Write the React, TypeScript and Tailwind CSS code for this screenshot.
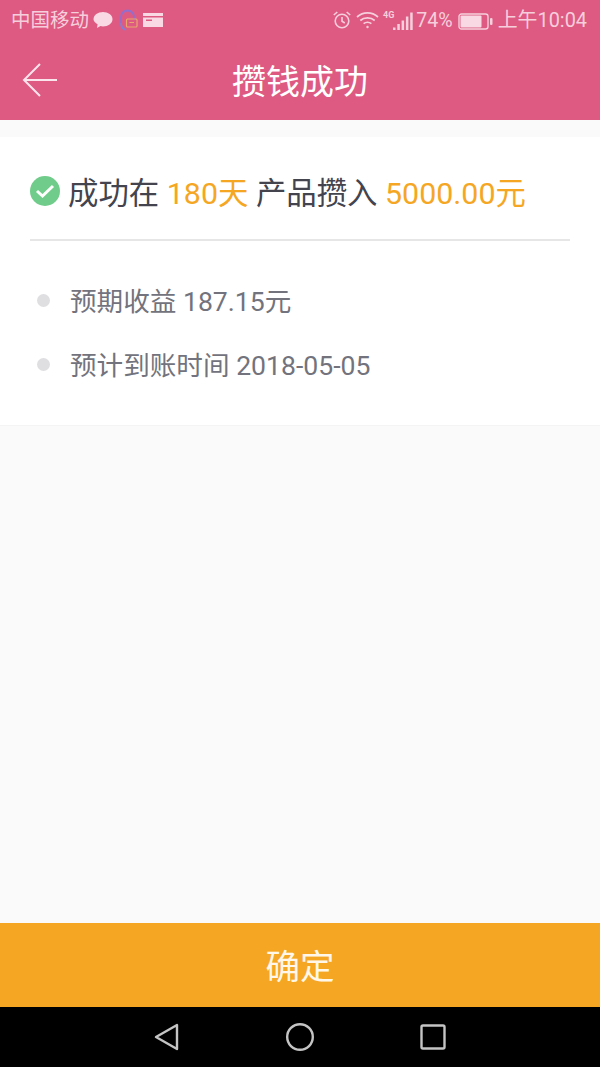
const cjk = "font-['Roboto','Noto_Sans_CJK_SC',sans-serif]";

const StatusLeft = () => (
  <div className="flex items-center pt-[2px]">
    <span className="ml-[11px] text-[19.5px] leading-none text-[#f6cfdc]">中国移动</span>
    <svg className="ml-[4px] -translate-y-[1px]" width="20" height="18" viewBox="0 0 20 18" fill="#f8d9e4">
      <path d="M10 1c5 0 9.500 3 9.500 7.200s-4.500 7.200-9.500 7.200c-.9 0-1.700-.1-2.500-.3L4 17l.6-3.700C2.400 12 .5 10.200.5 8.200.5 4 5 1 10 1z" />
    </svg>
    <svg className="ml-[6px] -translate-y-[1px]" width="19" height="23" viewBox="0 0 19 23" fill="none">
      <path d="M2 14V8a6.500 6.500 0 0 1 13 0v3" stroke="#8f6fd0" strokeWidth="1.800" />
      <path d="M2 14c0 3 1.500 6 5 7" stroke="#7f7fd8" strokeWidth="1.800" />
      <rect x="7.500" y="10" width="10.500" height="8" rx="1" stroke="#e8a86c" strokeWidth="1.200" />
      <path d="M10.500 13.500h4.500" stroke="#e8a86c" strokeWidth="1" />
    </svg>
    <svg className="ml-[5px] -translate-y-[1px]" width="20" height="16" viewBox="0 0 20 16" fill="#f8d9e4">
      <path d="M0 1h20v3H0z" />
      <path d="M0 5.500h20V15H0z" />
      <path d="M3 7.500h6v1.500H3z" fill="#de5a82" />
    </svg>
  </div>
);

const StatusRight = () => (
  <div className="flex items-center pt-[2px]">
    <svg className="-translate-y-[1px]" width="20" height="20" viewBox="0 0 20 20" fill="none" stroke="#f6cfdc" strokeWidth="1.600">
      <circle cx="10" cy="11" r="6.800" />
      <path d="M10 7v4.200l2.800 1.800M1.800 5l3.500-3M18.200 5l-3.500-3" />
    </svg>
    <svg className="ml-[4px] -translate-y-[1px]" width="23" height="18" viewBox="0 0 23 18" fill="none" stroke="#f6cfdc" strokeWidth="1.700">
      <path d="M1 6c6-5.500 15-5.500 21 0M4.300 9.500c4-3.600 10.400-3.600 14.400 0M7.600 12.700c2.200-1.800 5.600-1.800 7.800 0" />
      <circle cx="11.500" cy="16" r="1.200" fill="#f6cfdc" stroke="none" />
    </svg>
    <div className="ml-[4px] flex h-[20px] items-end">
      <span className="mb-[11px] text-[9px] leading-none font-bold text-[#f6cfdc]">4G</span>
      <svg className="ml-[-1px]" width="20" height="20" viewBox="0 0 20 20" fill="#f6cfdc">
        <path d="M0 16.500h2.500V19H0zM4.300 13h2.500v6H4.300zM8.600 9.500h2.500V19H8.600zM12.900 5.500h2.500V19h-2.500zM17.200 1.500h2.500V19h-2.500z" />
      </svg>
    </div>
    <span className="ml-[3px] text-[19.6px] leading-none text-[#f6cfdc]">74%</span>
    <svg className="ml-[5px]" width="35" height="17" viewBox="0 0 35 17" fill="none">
      <rect x="1" y="1" width="29" height="15" rx="2.500" stroke="#f6cfdc" strokeWidth="1.400" />
      <rect x="2.500" y="2.500" width="21" height="12" rx="1" fill="#f8d9e4" />
      <rect x="32" y="5" width="2.500" height="7" rx="1" fill="#f6cfdc" />
    </svg>
    <span className="mr-[13px] ml-[5px] text-[19.9px] leading-none text-[#f6cfdc]">上午10:04</span>
  </div>
);

const Bullet = ({ children }: { children: string }) => (
  <div className="flex h-[64px] items-center">
    <span className="ml-[7px] h-[13px] w-[13px] shrink-0 -translate-y-[1px] rounded-full bg-[#dfdfe1]" />
    <span className="ml-[21px] -translate-x-[1px] translate-y-[1px] text-[26.6px] leading-none text-[#72737c]">{children}</span>
  </div>
);

export default function App() {
  return (
    <div className={`flex h-[1067px] w-[600px] flex-col overflow-hidden bg-[#fafafa] ${cjk}`}>
      <div className="flex h-[120px] shrink-0 flex-col bg-[#de5a82]">
        <div className="flex h-[40px] items-center justify-between">
          <StatusLeft />
          <StatusRight />
        </div>
        <div className="relative flex h-[80px] items-center justify-center pt-[4px]">
          <svg className="absolute top-[22px] left-[22px]" width="36" height="36" viewBox="0 0 36 36" fill="none" stroke="#fbe4ec" strokeWidth="2">
            <path d="M18 2L2 18l16 16M2 18h33" />
          </svg>
          <span className="text-[34px] leading-none text-white">攒钱成功</span>
        </div>
      </div>

      <div className="mt-[17px] h-[289px] shrink-0 border-b border-[#f4f4f4] bg-white px-[30px]">
        <div className="flex h-[104px] items-start border-b-2 border-[#e6e6e6]">
          <svg className="mt-[39px] shrink-0" width="30" height="30" viewBox="0 0 30 30">
            <circle cx="15" cy="15" r="15" fill="#70cc8a" />
            <path d="M7 15l5.500 5L23 10" fill="none" stroke="#fff" strokeWidth="3" />
          </svg>
          <div className="mt-[42px] ml-[8px] text-[30.4px] leading-none whitespace-pre text-[#43444e]">
            成功在 <span className="text-[#f5a623]">180天</span> 产品攒入 <span className="text-[#f5a623]">5000.00元</span>
          </div>
        </div>
        <div className="pt-[28px]">
          <Bullet>预期收益 187.15元</Bullet>
          <Bullet>预计到账时间 2018-05-05</Bullet>
        </div>
      </div>

      <div className="flex-1" />

      <div className="flex h-[84px] shrink-0 items-center justify-center bg-[#f5a623] pt-[5px] text-[34.5px] leading-none text-[#fff8ea]">
        确定
      </div>

      <div className="flex h-[60px] shrink-0 items-center bg-black">
        <svg className="ml-[154px]" width="26" height="28" viewBox="0 0 26 28" fill="none" stroke="#c4c4c4" strokeWidth="2.400" strokeLinejoin="round">
          <path d="M23 2v24L2 14z" />
        </svg>
        <svg className="ml-[105px]" width="30" height="30" viewBox="0 0 30 30" fill="none" stroke="#c4c4c4" strokeWidth="2.400">
          <circle cx="15" cy="15" r="12.800" />
        </svg>
        <svg className="ml-[105px]" width="26" height="26" viewBox="0 0 26 26" fill="none" stroke="#c4c4c4" strokeWidth="2.400">
          <rect x="1.500" y="1.500" width="23" height="23" rx="1.500" />
        </svg>
      </div>
    </div>
  );
}
